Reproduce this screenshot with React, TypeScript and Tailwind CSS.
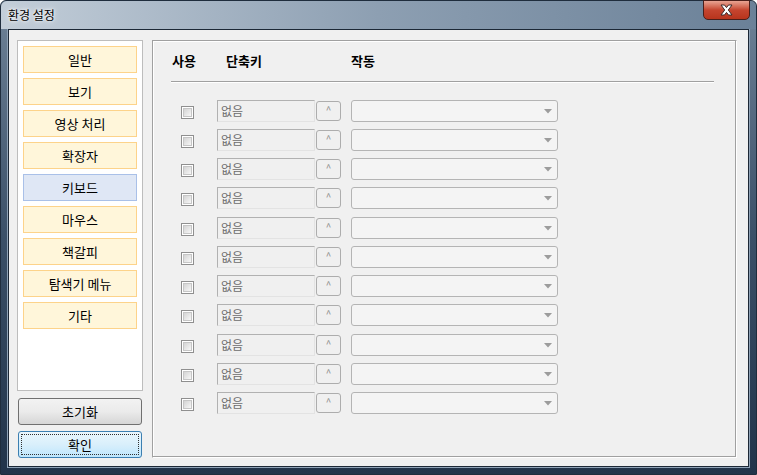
import React from 'react'

const tabs = ['일반', '보기', '영상 처리', '확장자', '키보드', '마우스', '책갈피', '탐색기 메뉴', '기타']

// row heights follow the uneven spacing of the original dialog
const rowHeights = [29, 29, 29, 30, 29, 29, 29, 30, 29, 29, 29]

const font = { fontFamily: '"Noto Sans CJK KR", "Noto Sans", sans-serif' }

function CheckBox() {
  return (
    <div className="w-[13px] h-[13px] border border-[#8f8f8f] bg-white p-[1px]">
      <div className="w-full h-full bg-gradient-to-br from-[#d4d4d4] to-[#f7f7f7] border border-[#c6c6c6]" />
    </div>
  )
}

function ShortcutRow({ height }: { height: number }) {
  return (
    <div className="flex items-start" style={{ height }}>
      <div className="w-[13px] mt-[6px]">
        <CheckBox />
      </div>
      <div className="ml-[23px] w-[98px] h-[22px] border border-[#b1b1b1] border-r-[#e3e3e3] border-b-[#e3e3e3] bg-[#f0f0f0] flex items-center pl-[3px]">
        <span className="text-[12px] text-[#6d6d6d] leading-none">없음</span>
      </div>
      <div className="ml-[1px] mt-[1px] w-[25px] h-[20px] border border-[#adadad] rounded-[3px] bg-[#f0f0f0] flex items-center justify-center">
        <span className="text-[10px] text-[#8a8a8a] leading-none mt-[-3px]">^</span>
      </div>
      <div className="ml-[10px] w-[207px] h-[22px] border border-[#b4b4b4] rounded-[3px] bg-[#f4f4f4] flex items-center justify-end pr-[5px]">
        <svg width="8" height="5" viewBox="0 0 8 5">
          <path d="M0 0 H8 L4 4.5 Z" fill="#9c9c9c" />
        </svg>
      </div>
    </div>
  )
}

export default function App() {
  return (
    <div
      className="w-[757px] h-[475px] flex flex-col bg-gradient-to-b from-[#6f8398] via-[#3b5068] to-[#22344a] rounded-t-[6px] border border-[#1f2d3d]"
      style={font}
    >
      {/* title bar */}
      <div className="h-[28px] flex items-start justify-between relative bg-gradient-to-r from-[#c3ced9] via-[#8d9fb2] to-[#6b8198] rounded-t-[6px]">
        <div className="pl-[7px] pt-[5px] text-[12px] text-black [text-shadow:0_0_6px_#ffffff,0_0_3px_#ffffff]">
          환경 설정
        </div>
        <div className="mr-[6px] mt-[-1px] w-[47px] h-[20px] rounded-b-[5px] border border-[#4b1f1a] bg-gradient-to-b from-[#e8a493] via-[#c5452f] to-[#b8341c] flex items-center justify-center">
          <svg width="15" height="12" viewBox="0 0 15 12">
            <path
              d="M2 1 L5.5 1 L7.5 3.6 L9.5 1 L13 1 L9.3 6 L13 11 L9.5 11 L7.5 8.4 L5.5 11 L2 11 L5.7 6 Z"
              fill="#ffffff"
              stroke="#3b2a2a"
              strokeWidth="1"
            />
          </svg>
        </div>
      </div>

      {/* client area */}
      <div className="flex-1 px-[7px] pb-[7px]">
        <div className="w-[741px] h-[438px] bg-[#f0f0f0] border border-[#1c2836] shadow-[0_0_0_1px_#8fa2b6] flex pl-[8px] pt-[10px]">
          {/* left column */}
          <div className="w-[126px] flex flex-col">
            <div className="w-[126px] h-[351px] bg-white border border-[#bdbdbd] flex flex-col gap-[5px] pt-[5px] pl-[5px]">
              {tabs.map((t) => (
                <div
                  key={t}
                  className={
                    t === '키보드'
                      ? 'w-[114px] h-[27px] border border-[#a9c0e8] bg-[#dfe7f5] flex items-center justify-center text-[13px] text-black'
                      : 'w-[114px] h-[27px] border border-[#fdd38a] bg-[#fff6da] flex items-center justify-center text-[13px] text-black'
                  }
                >
                  {t}
                </div>
              ))}
            </div>
            <div className="mt-[7px] ml-[1px] w-[124px] h-[27px] rounded-[3px] border border-[#707070] bg-gradient-to-b from-[#f2f2f2] via-[#ebebeb] to-[#d6d6d6] flex items-center justify-center text-[13px] text-black">
              초기화
            </div>
            <div className="mt-[6px] ml-[1px] w-[124px] h-[27px] rounded-[3px] border border-[#3c7fb1] bg-gradient-to-b from-[#eaf6fd] via-[#d9effb] to-[#bee6fd] p-[2px]">
              <div className="w-full h-full border border-dotted border-[#303030] flex items-center justify-center text-[13px] text-black">
                확인
              </div>
            </div>
          </div>

          {/* right group box */}
          <div className="ml-[9px] w-[585px] h-[418px] border border-[#a0a0a0] border-r-white border-b-white shadow-[inset_-1px_-1px_0_#a0a0a0,inset_1px_1px_0_#ffffff]">
            <div className="flex pl-[19px] pt-[10px] h-[28px] text-[13px] font-bold text-black">
              <div className="w-[54px]">사용</div>
              <div className="w-[125px]">단축키</div>
              <div>작동</div>
            </div>
            <div className="ml-[18px] mt-[12px] w-[543px] h-[2px] border-t border-[#a0a0a0] border-b border-b-white" />
            <div className="pl-[28px] mt-[17px] flex flex-col">
              {rowHeights.map((h, i) => (
                <ShortcutRow key={i} height={h} />
              ))}
            </div>
          </div>
        </div>
      </div>
    </div>
  )
}
